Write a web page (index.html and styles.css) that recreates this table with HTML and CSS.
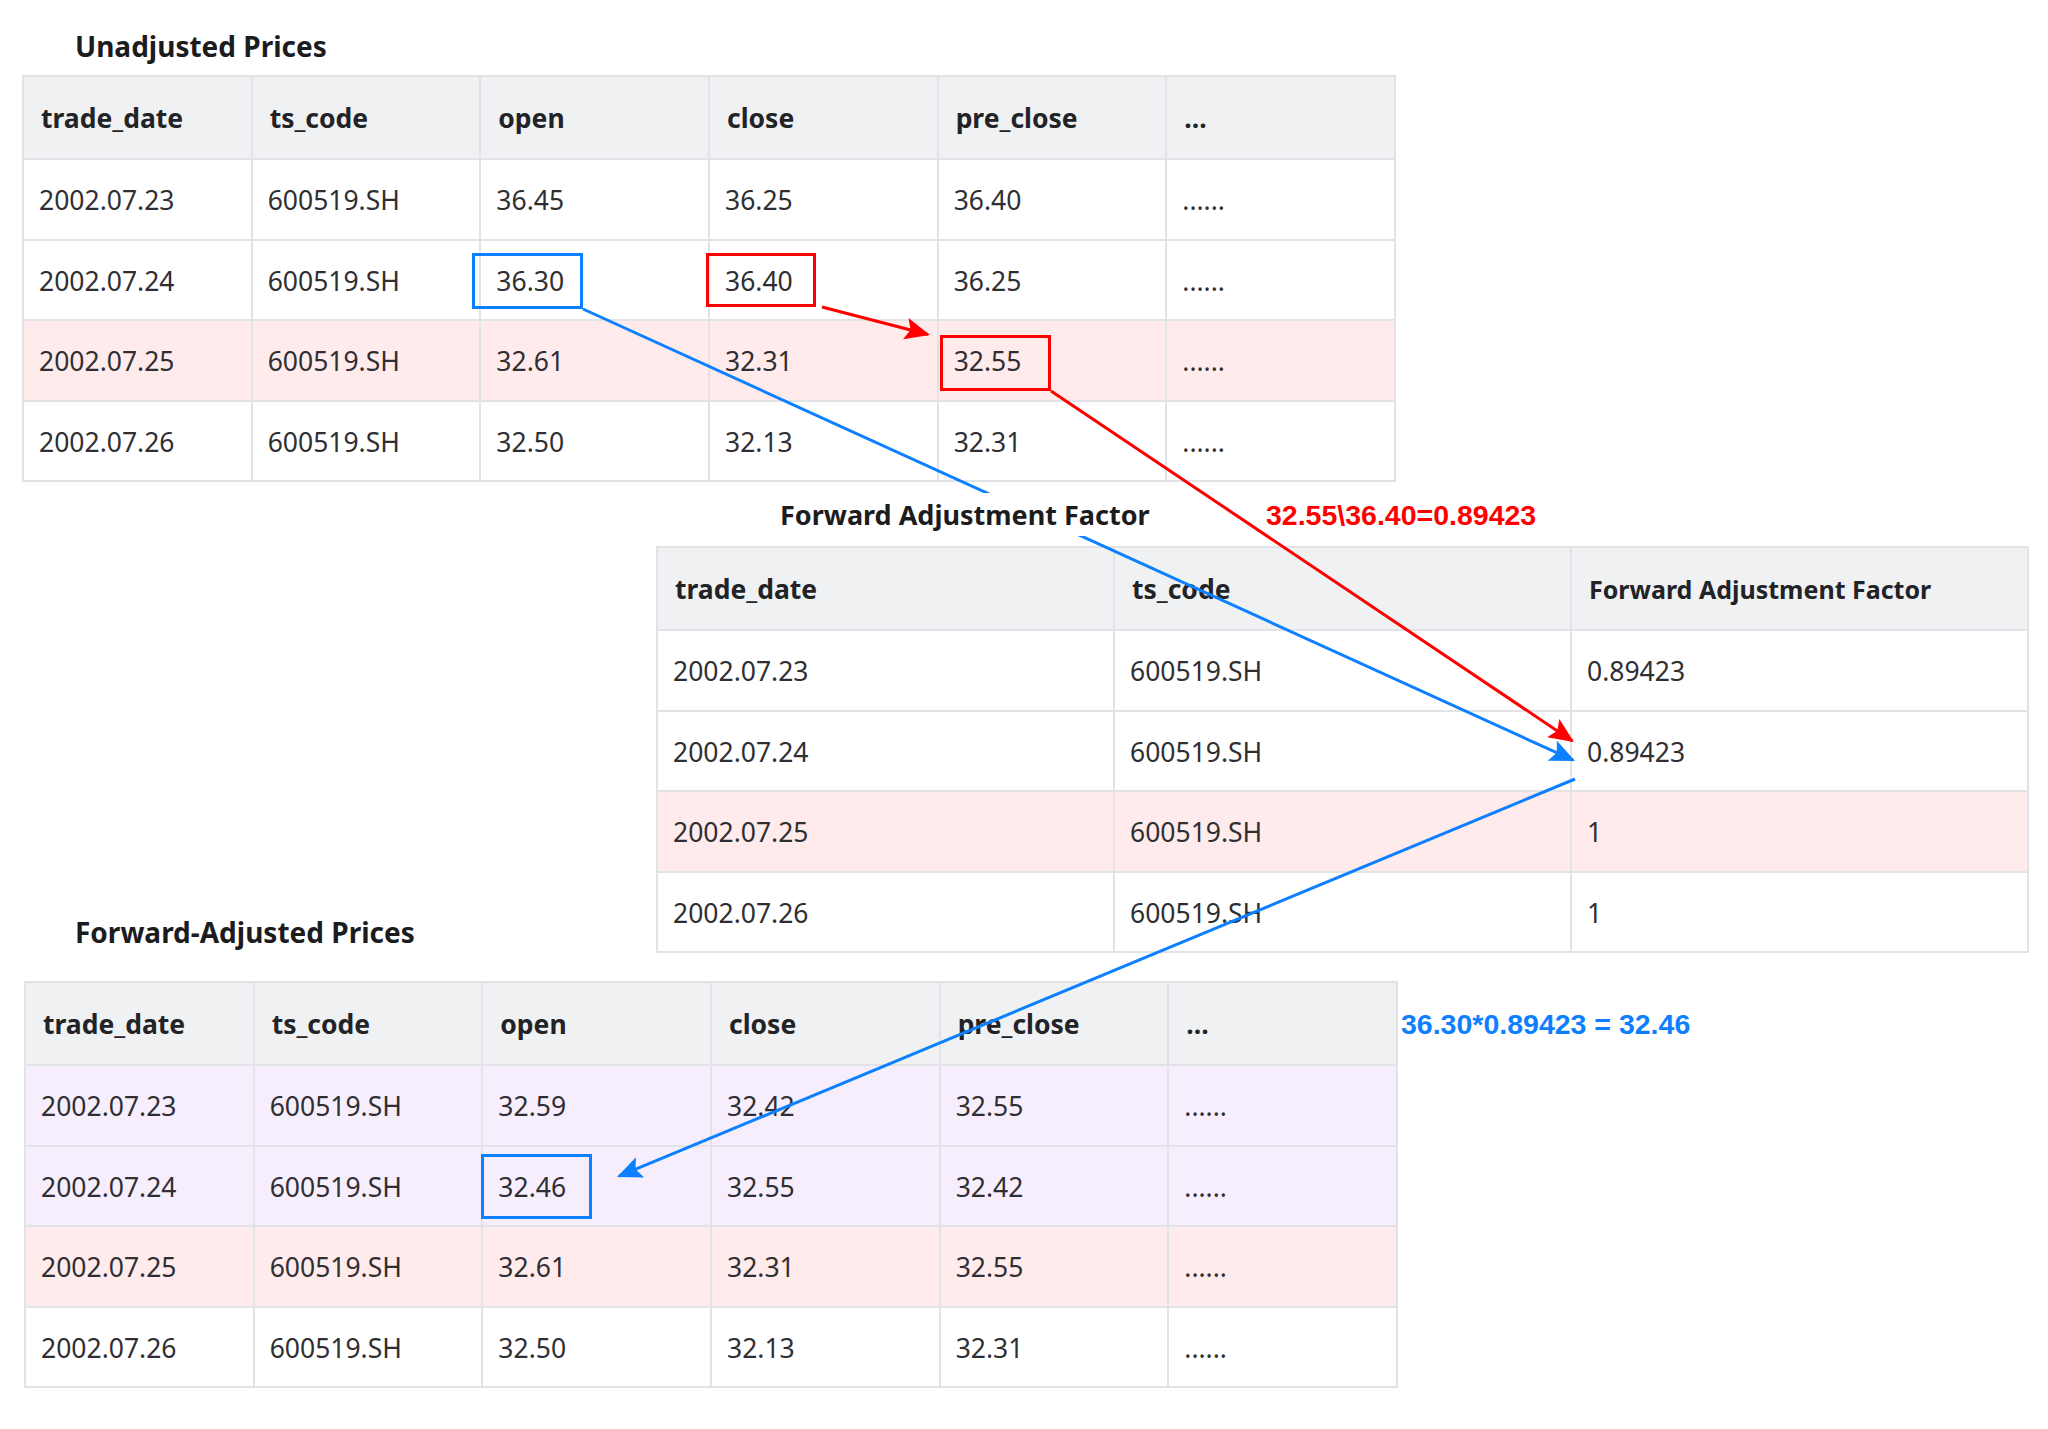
FILE: index.html
```html
<!DOCTYPE html>
<html lang="en">
<head>
<meta charset="utf-8">
<title>Forward Adjustment</title>
<link rel="stylesheet" href="styles.css">
</head>
<body>
<div class="canvas">
  <section class="sec-top">
    <h2 class="title title-top">Unadjusted Prices</h2>
    <table class="data grid6">
      <thead>
        <tr><th>trade_date</th><th>ts_code</th><th>open</th><th>close</th><th>pre_close</th><th>...</th></tr>
      </thead>
      <tbody>
        <tr><td>2002.07.23</td><td>600519.SH</td><td>36.45</td><td>36.25</td><td>36.40</td><td>......</td></tr>
        <tr><td>2002.07.24</td><td>600519.SH</td><td>36.30</td><td>36.40</td><td>36.25</td><td>......</td></tr>
        <tr class="pink"><td>2002.07.25</td><td>600519.SH</td><td>32.61</td><td>32.31</td><td>32.55</td><td>......</td></tr>
        <tr><td>2002.07.26</td><td>600519.SH</td><td>32.50</td><td>32.13</td><td>32.31</td><td>......</td></tr>
      </tbody>
    </table>
  </section>

  <section class="mid">
    <div class="mid-left">
      <h2 class="title title-left">Forward-Adjusted Prices</h2>
    </div>
    <div class="mid-right">
      <div class="mid-head">
        <h2 class="title title-factor"><span class="mask">Forward Adjustment Factor</span></h2>
        <span class="calc calc-red">32.55\36.40=0.89423</span>
      </div>
      <table class="data grid3">
        <thead>
          <tr><th>trade_date</th><th>ts_code</th><th class="th-small">Forward Adjustment Factor</th></tr>
        </thead>
        <tbody>
          <tr><td>2002.07.23</td><td>600519.SH</td><td>0.89423</td></tr>
          <tr><td>2002.07.24</td><td>600519.SH</td><td>0.89423</td></tr>
          <tr class="pink"><td>2002.07.25</td><td>600519.SH</td><td>1</td></tr>
          <tr><td>2002.07.26</td><td>600519.SH</td><td>1</td></tr>
        </tbody>
      </table>
    </div>
  </section>

  <section class="bottom">
    <table class="data grid6">
      <thead>
        <tr><th>trade_date</th><th>ts_code</th><th>open</th><th>close</th><th>pre_close</th><th>...</th></tr>
      </thead>
      <tbody>
        <tr class="lilac"><td>2002.07.23</td><td>600519.SH</td><td>32.59</td><td>32.42</td><td>32.55</td><td>......</td></tr>
        <tr class="lilac"><td>2002.07.24</td><td>600519.SH</td><td>32.46</td><td>32.55</td><td>32.42</td><td>......</td></tr>
        <tr class="pink"><td>2002.07.25</td><td>600519.SH</td><td>32.61</td><td>32.31</td><td>32.55</td><td>......</td></tr>
        <tr><td>2002.07.26</td><td>600519.SH</td><td>32.50</td><td>32.13</td><td>32.31</td><td>......</td></tr>
      </tbody>
    </table>
    <span class="calc calc-blue">36.30*0.89423 = 32.46</span>
  </section>

  <svg class="overlay" width="2048" height="1429" viewBox="0 0 2048 1429">
    <defs>
      <marker id="head-red" markerUnits="userSpaceOnUse" markerWidth="30" markerHeight="24" refX="23" refY="11" orient="auto">
        <path d="M0,0 L25,11 L0,22 L5,11 Z" fill="#ff0000"/>
      </marker>
      <marker id="head-blue" markerUnits="userSpaceOnUse" markerWidth="30" markerHeight="24" refX="23" refY="11" orient="auto">
        <path d="M0,0 L25,11 L0,22 L5,11 Z" fill="#0d80ff"/>
      </marker>
    </defs>
    <g fill="none" stroke-width="3">
      <rect x="473.5" y="254.5" width="108" height="53" stroke="#0d80ff"/>
      <rect x="707.5" y="254.5" width="107" height="51" stroke="#ff0000"/>
      <rect x="941.5" y="336.5" width="108" height="53" stroke="#ff0000"/>
      <rect x="482.5" y="1155.5" width="108" height="62" stroke="#0d80ff"/>
      <line x1="822" y1="307" x2="928" y2="334.5" stroke="#ff0000" marker-end="url(#head-red)"/>
      <line x1="1051" y1="391" x2="1572.3" y2="740.9" stroke="#ff0000" marker-end="url(#head-red)"/>
      <line x1="583" y1="309" x2="1573.2" y2="760.2" stroke="#0d80ff" marker-end="url(#head-blue)"/>
      <line x1="1575" y1="779" x2="618.9" y2="1176.2" stroke="#0d80ff" marker-end="url(#head-blue)"/>
    </g>
  </svg>
</div>
</body>
</html>
```

FILE: styles.css
```css
html, body {
  margin: 0;
  padding: 0;
  background: #ffffff;
}

.canvas {
  position: relative;
  width: 2048px;
  height: 1429px;
  box-sizing: border-box;
  padding: 27px 0 0 22px;
  overflow: hidden;
  font-family: "Noto Sans", "Open Sans", sans-serif;
}

.title {
  margin: 0;
  font-size: 28px;
  font-weight: 700;
  line-height: 38px;
  color: #1c1c1e;
  white-space: nowrap;
}

.title-top {
  padding-left: 53px;
  margin-bottom: 10px;
}

/* tables */
.data {
  border-collapse: collapse;
  table-layout: fixed;
}

.grid6 {
  width: 1374px;
}

.grid3 {
  width: 1373px;
}

.data th,
.data td {
  border: 2px solid #e2e3e6;
  text-align: left;
  white-space: nowrap;
}

.data th {
  height: 81px;
  padding: 0 17px;
  background: #f0f1f3;
  font-size: 26.5px;
  font-weight: 700;
  color: #222326;
}

.data th.th-small {
  font-size: 25px;
}

.data td {
  height: 76.5px;
  padding: 2px 15px 0;
  background: #ffffff;
  font-size: 26.5px;
  font-weight: 400;
  color: #2f2f33;
}

.data tr.pink td {
  background: #ffebeb;
}

.data tr.lilac td {
  background: #f7eefd;
}

/* middle band: factor table on the right, third title on the left */
.mid {
  display: grid;
  grid-template-columns: 634px 1373px;
}

.mid-left {
  align-self: end;
}

.title-left {
  padding-left: 53px;
  margin-bottom: 2px;
}

.mid-head {
  height: 64px;
  box-sizing: border-box;
  padding-top: 14px;
  display: flex;
  align-items: baseline;
}

.title-factor {
  flex: 0 0 486px;
  margin-left: 124px;
  font-size: 27px;
  position: relative;
  z-index: 2;
}

.mask {
  background: #ffffff;
  padding: 3px 0;
}

.calc {
  font-family: "Liberation Sans", Arial, sans-serif;
  font-weight: 700;
  white-space: nowrap;
}

.calc-red {
  font-size: 28.5px;
  color: #ff0000;
}

/* bottom band */
.bottom {
  display: flex;
  align-items: flex-start;
  margin-top: 28px;
  padding-left: 2px;
}

.calc-blue {
  font-size: 28.5px;
  color: #0d80ff;
  margin-left: 3px;
  margin-top: 27px;
}

.overlay {
  position: absolute;
  left: 0;
  top: 0;
  z-index: 1;
  pointer-events: none;
}
```
